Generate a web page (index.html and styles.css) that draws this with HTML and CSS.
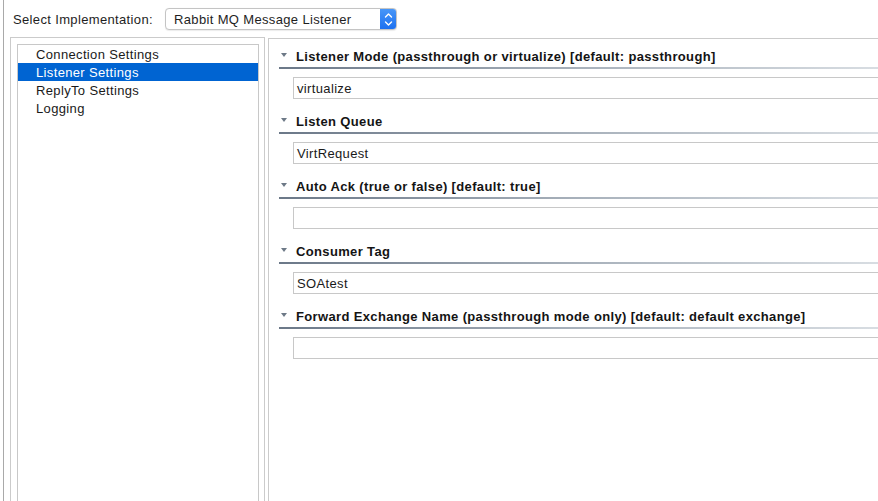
FILE: index.html
```html
<!DOCTYPE html>
<html>
<head>
<meta charset="utf-8">
<link rel="stylesheet" href="styles.css">
</head>
<body>
<div class="window">
  <div class="header">
    <span class="label">Select Implementation:</span>
    <div class="select">
      <span class="select-text">Rabbit MQ Message Listener</span>
      <span class="stepper">
        <svg width="17" height="21" viewBox="0 0 17 21">
          <path d="M5.5 8 L8.5 5 L11.5 8" fill="none" stroke="#fff" stroke-width="1.4" stroke-linecap="round" stroke-linejoin="round"/>
          <path d="M5.5 13 L8.5 16 L11.5 13" fill="none" stroke="#fff" stroke-width="1.4" stroke-linecap="round" stroke-linejoin="round"/>
        </svg>
      </span>
    </div>
  </div>
  <div class="content">
    <div class="group">
      <ul class="list">
        <li class="item">Connection Settings</li>
        <li class="item selected">Listener Settings</li>
        <li class="item">ReplyTo Settings</li>
        <li class="item">Logging</li>
      </ul>
    </div>
    <div class="panel">
      <div class="section">
        <div class="title"><span class="tri"></span><span>Listener Mode (passthrough or virtualize) [default: passthrough]</span></div>
        <div class="sep"></div>
        <div class="field">virtualize</div>
      </div>
      <div class="section">
        <div class="title"><span class="tri"></span><span>Listen Queue</span></div>
        <div class="sep"></div>
        <div class="field">VirtRequest</div>
      </div>
      <div class="section">
        <div class="title"><span class="tri"></span><span>Auto Ack (true or false) [default: true]</span></div>
        <div class="sep"></div>
        <div class="field"></div>
      </div>
      <div class="section">
        <div class="title"><span class="tri"></span><span>Consumer Tag</span></div>
        <div class="sep"></div>
        <div class="field">SOAtest</div>
      </div>
      <div class="section">
        <div class="title"><span class="tri"></span><span>Forward Exchange Name (passthrough mode only) [default: default exchange]</span></div>
        <div class="sep"></div>
        <div class="field"></div>
      </div>
    </div>
  </div>
</div>
</body>
</html>
```

FILE: styles.css
```css
* { box-sizing: border-box; }
html, body {
  margin: 0;
  padding: 0;
  background: #ffffff;
  overflow: hidden;
}
body {
  font-family: "Liberation Sans", Arial, sans-serif;
  font-size: 13px;
  letter-spacing: 0.35px;
  color: #1e1e1e;
}
.window {
  margin-left: 3px;
  border-left: 1px solid #a9a9a9;
  height: 501px;
  display: flex;
  flex-direction: column;
}
.header {
  height: 37px;
  display: flex;
  align-items: center;
  padding-left: 9px;
  padding-top: 1px;
}
.label {
  width: 152px;
  flex: none;
}
.select {
  width: 232px;
  height: 22px;
  border: 1px solid #c4c4c4;
  border-radius: 4px;
  display: flex;
  align-items: center;
  background: #fff;
  box-shadow: 0 0.5px 1px rgba(0,0,0,0.08);
  overflow: hidden;
}
.select-text {
  flex: 1;
  padding-left: 8px;
}
.stepper {
  width: 17px;
  height: 22px;
  margin-top: -1px;
  margin-bottom: -1px;
  margin-right: -1px;
  background: linear-gradient(#4a98f8, #1b6ff0);
  border-radius: 0 4px 4px 0;
  display: flex;
  align-items: center;
  justify-content: center;
}
.content {
  flex: 1;
  display: flex;
  padding-left: 6px;
  min-height: 0;
}
.group {
  width: 255px;
  flex: none;
  border: 1px solid #cbcbcb;
  border-bottom: none;
  padding: 6px 5px 0 6px;
  display: flex;
  flex-direction: column;
}
.list {
  list-style: none;
  margin: 0;
  padding: 0;
  flex: 1;
  border: 1px solid #c8c8c8;
  border-bottom: none;
}
.item {
  height: 18px;
  line-height: 17px;
  padding-top: 1px;
  padding-left: 18px;
  color: #1a1a1a;
}
.selected {
  background: #0064d2;
  color: #ffffff;
}
.panel {
  flex: 1;
  margin-left: 3px;
  margin-top: 1px;
  border-left: 1px solid #cbcbcb;
  border-top: 1px solid #cbcbcb;
  padding-left: 10px;
  padding-top: 10px;
}
.section {
  margin-bottom: 15px;
}
.title {
  height: 16px;
  line-height: 16px;
  font-weight: bold;
  display: flex;
  align-items: flex-start;
  color: #141414;
}
.tri {
  width: 0;
  height: 0;
  margin-left: 2px;
  margin-top: 4px;
  margin-right: 9px;
  border-left: 3.5px solid transparent;
  border-right: 3.5px solid transparent;
  border-top: 4px solid #6d7987;
}
.sep {
  margin-top: 2px;
  height: 2px;
  background: linear-gradient(to right, #6b7888, #a8b1bb 50%, #d8dde2);
}
.field {
  margin-top: 8px;
  margin-left: 14px;
  height: 22px;
  border: 1px solid #c8c8c8;
  border-right: none;
  padding-left: 3px;
  padding-top: 2px;
  line-height: 18px;
  color: #1a1a1a;
}
```
